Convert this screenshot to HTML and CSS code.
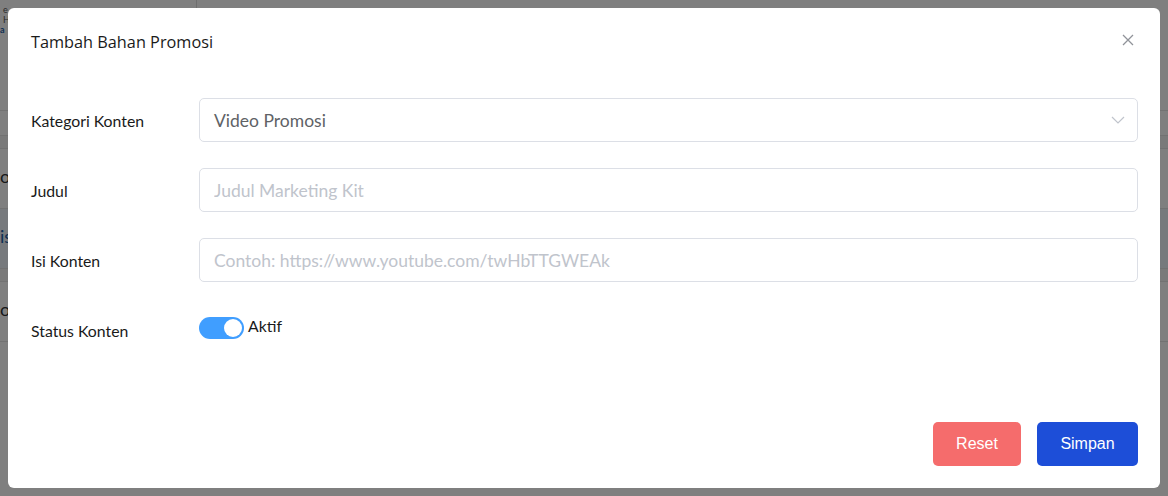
FILE: index.html
```html
<!DOCTYPE html>
<html lang="en">
<head>
  <meta charset="UTF-8" />
  <meta name="viewport" content="width=device-width, initial-scale=1.0"/>
  <title>Tambah Bahan Promosi</title>
  <link rel="stylesheet" href="styles.css">
</head>
<body>

<!-- halaman di belakang modal -->
<div class="page">
  <div class="page-top">
    <div class="page-note">
      <span>e</span>
      <span>H</span>
      <a href="#">a</a>
    </div>
    <div class="page-side"></div>
  </div>
  <div class="page-row line"></div>
  <div class="page-row"></div>
  <div class="page-row line shade"></div>
  <div class="page-row tall"><span>o</span></div>
  <div class="page-row tall blue"><a href="#">is</a></div>
  <div class="page-row line shade"></div>
  <div class="page-row tall"><span>o</span></div>
</div>

<div class="overlay"></div>

<!-- MODAL -->
<div class="modal">
  <div class="modal-header">
    <h3>Tambah Bahan Promosi</h3>
    <button class="close" aria-label="Tutup">
      <svg width="12" height="12" viewBox="0 0 12 12"><path d="M1 1L11 11M11 1L1 11" stroke="#909399" stroke-width="1.3" fill="none"/></svg>
    </button>
  </div>

  <form class="modal-body" id="promoForm">
    <div class="form-row">
      <label>Kategori Konten</label>
      <div class="field select">
        <span class="value">Video Promosi</span>
        <svg class="chevron" width="14" height="8" viewBox="0 0 14 8"><path d="M1 1L7 7L13 1" stroke="#c0c4cc" stroke-width="1.2" fill="none"/></svg>
      </div>
    </div>
    <div class="form-row">
      <label for="judul">Judul</label>
      <input class="field" id="judul" type="text" placeholder="Judul Marketing Kit" />
    </div>
    <div class="form-row">
      <label for="isi">Isi Konten</label>
      <input class="field" id="isi" type="text" placeholder="Contoh: https://www.youtube.com/twHbTTGWEAk" />
    </div>
    <div class="form-row">
      <label>Status Konten</label>
      <div class="switch-wrap">
        <span class="switch"><span class="knob"></span></span>
        <span class="switch-label">Aktif</span>
      </div>
    </div>
  </form>

  <div class="modal-footer">
    <button class="btn btn-reset">Reset</button>
    <button class="btn btn-save">Simpan</button>
  </div>
</div>

</body>
</html>
```

FILE: styles.css
```css
body {
  margin: 0;
  font-family: Lato, "Noto Sans", sans-serif;
  background: #fff;
  color: #303133;
}
.page {
  width: 1168px;
  height: 496px;
  overflow: hidden;
}
.page-top {
  display: flex;
  height: 100px;
}
.page-note {
  width: 197px;
  border-right: 1px solid #ddd;
  font-size: 9px;
  line-height: 10px;
  color: #555;
  padding: 5px 0 0 3px;
  box-sizing: border-box;
  display: flex;
  flex-direction: column;
}
.page-note a {
  color: #1f5fa8;
  text-decoration: none;
  font-weight: bold;
  margin-left: -3px;
}
.page-side {
  flex: 1;
}
.page-row {
  height: 24px;
  border-bottom: 1px solid #e4e4e4;
}
.page-row.line {
  height: 10px;
}
.page-row.shade {
  background: #f4f4f5;
  height: 12px;
}
.page-row.tall {
  height: 60px;
  font-size: 18px;
  padding-top: 16px;
  box-sizing: border-box;
}
.page-row.blue {
  background: #eef4fb;
}
.page-row.blue a {
  color: #1f5fa8;
  text-decoration: none;
}
.overlay {
  position: fixed;
  inset: 0;
  background: rgba(0, 0, 0, 0.5);
}
.modal {
  position: fixed;
  top: 8px;
  left: 8px;
  width: 1152px;
  height: 480px;
  background: #fff;
  border-radius: 6px;
  display: flex;
  flex-direction: column;
  box-sizing: border-box;
  padding: 0 22px 22px 23px;
}
.modal-header {
  display: flex;
  justify-content: space-between;
  align-items: center;
  padding-top: 22px;
}
.modal-header h3 {
  margin: 0;
  font-family: "Open Sans", sans-serif;
  font-weight: normal;
  font-size: 16.3px;
  line-height: 24px;
  color: #1a1a1a;
}
.close {
  background: none;
  border: none;
  padding: 0;
  margin-right: 4px;
  margin-top: -4px;
  cursor: pointer;
  display: flex;
}
.modal-body {
  margin-top: 44px;
  display: flex;
  flex-direction: column;
  gap: 26px;
}
.form-row {
  display: flex;
  align-items: center;
  height: 44px;
}
.form-row label {
  width: 168px;
  flex-shrink: 0;
  font-size: 15.8px;
  color: #1a1a1a;
  padding-top: 1px;
}
.field {
  flex: 1;
  height: 44px;
  box-sizing: border-box;
  border: 1px solid #dcdfe6;
  border-radius: 5px;
  padding: 0 14px;
  font-family: Lato, sans-serif;
  font-size: 17.5px;
  color: #606266;
  outline: none;
}
.field::placeholder {
  color: #c0c4cc;
}
.select {
  display: flex;
  align-items: center;
  justify-content: space-between;
}
.chevron {
  margin-right: -2px;
}
.switch-wrap {
  display: flex;
  align-items: center;
  gap: 4px;
  margin-top: -4px;
}
.switch {
  width: 45px;
  height: 22px;
  border-radius: 11px;
  background: #409eff;
  position: relative;
}
.knob {
  position: absolute;
  top: 2px;
  right: 2px;
  width: 18px;
  height: 18px;
  border-radius: 50%;
  background: #fff;
}
.switch-label {
  font-size: 15.8px;
  color: #1a1a1a;
  padding-bottom: 5px;
}
.modal-footer {
  margin-top: auto;
  display: flex;
  justify-content: flex-end;
  gap: 16px;
}
.btn {
  height: 44px;
  border: none;
  border-radius: 5px;
  color: #fff;
  font-family: "Liberation Sans", Arial, sans-serif;
  font-size: 16px;
  cursor: pointer;
}
.btn-reset {
  width: 88px;
  background: #f56c6c;
}
.btn-save {
  width: 101px;
  background: #1d4ed8;
}
```
